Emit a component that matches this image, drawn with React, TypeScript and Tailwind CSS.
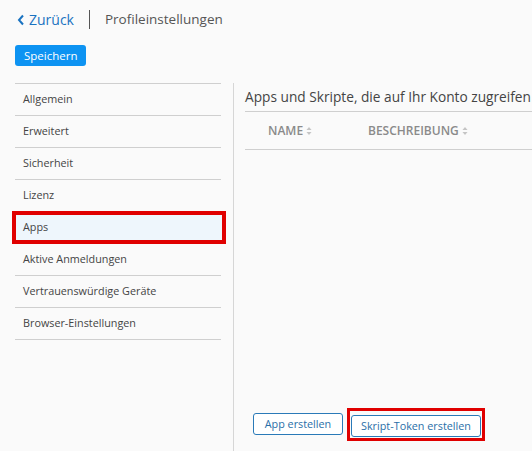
import React from "react";

const font = { fontFamily: '"Open Sans", "Noto Sans", sans-serif' };

const items = [
  "Allgemein",
  "Erweitert",
  "Sicherheit",
  "Lizenz",
  "Apps",
  "Aktive Anmeldungen",
  "Vertrauenswürdige Geräte",
  "Browser-Einstellungen",
];

function SortIcon() {
  return (
    <svg width="6" height="10" viewBox="0 0 6 10" className="ml-[3px]">
      <path d="M3 1 L5.5 4 H0.5 Z" fill="#c4c4c4" />
      <path d="M3 9 L5.5 6 H0.5 Z" fill="#c4c4c4" />
    </svg>
  );
}

export default function App() {
  return (
    <div
      className="w-[532px] h-[451px] bg-[#fafafa] text-[#444] overflow-hidden flex flex-col"
      style={font}
    >
      {/* header */}
      <div className="flex items-center h-[19px] mt-[10px] pl-[17px]">
        <a className="flex items-center text-[#1a73c1] text-[14px] gap-[4px]">
          <svg width="8" height="12" viewBox="0 0 8 12">
            <path d="M6 1.5 L2 6 L6 10.5" stroke="#1a73c1" strokeWidth="2" fill="none" />
          </svg>
          Zurück
        </a>
        <div className="w-px h-[19px] bg-[#555] ml-[15px] mr-[15px]" />
        <span className="text-[13.5px] text-[#555]">Profileinstellungen</span>
      </div>

      <div className="flex pl-[15px] mt-[16px]">
        <button className="h-[21px] px-[9px] rounded-[3px] bg-[#0d93f2] text-white text-[11.5px] leading-none">
          Speichern
        </button>
      </div>

      <div className="flex flex-1 mt-[17px]">
        {/* side nav */}
        <div className="w-[233px] pl-[15px] pr-[12px]">
          <div className="border-t border-[#cfcfcf]">
            {items.map((it) =>
              it === "Apps" ? (
                <div
                  key={it}
                  className="h-[33px] -ml-[3px] -mr-[5px] -mt-px border-[4px] border-[#e00000] bg-[#eef6fc] flex items-center pl-[7px] text-[10.8px]"
                >
                  {it}
                </div>
              ) : (
                <div
                  key={it}
                  className="h-[32px] border-b border-[#cfcfcf] flex items-center pl-[8px] text-[10.8px]"
                >
                  {it}
                </div>
              )
            )}
          </div>
        </div>

        {/* content */}
        <div className="flex-1 border-l border-[#d6d6d6] pl-[11px] flex flex-col">
          <div className="h-[29px] flex items-center text-[13.7px] text-[#444] whitespace-nowrap border-b border-[#cfcfcf]">
            Apps und Skripte, die auf Ihr Konto zugreifen
          </div>
          <div className="h-[38px] flex items-center border-b border-[#cfcfcf] text-[12px] font-semibold text-[#8a8a8a]">
            <div className="w-[123px] pl-[23px] flex items-center">
              NAME
              <SortIcon />
            </div>
            <div className="flex items-center">
              BESCHREIBUNG
              <SortIcon />
            </div>
          </div>
          <div className="flex-1" />
          <div className="flex items-center mb-[10px] pl-[8px]">
            <button className="h-[22px] w-[90px] rounded-[3px] border border-[#2a7ab8] text-[#2a6fa8] text-[10.8px] bg-white leading-none">
              App erstellen
            </button>
            <div className="ml-[4px] border-[3px] border-[#e00000] p-px">
              <button className="h-[22px] w-[130px] rounded-[3px] border border-[#2a7ab8] text-[#2a6fa8] text-[10.8px] bg-white leading-none">
                Skript-Token erstellen
              </button>
            </div>
          </div>
        </div>
      </div>
    </div>
  );
}
